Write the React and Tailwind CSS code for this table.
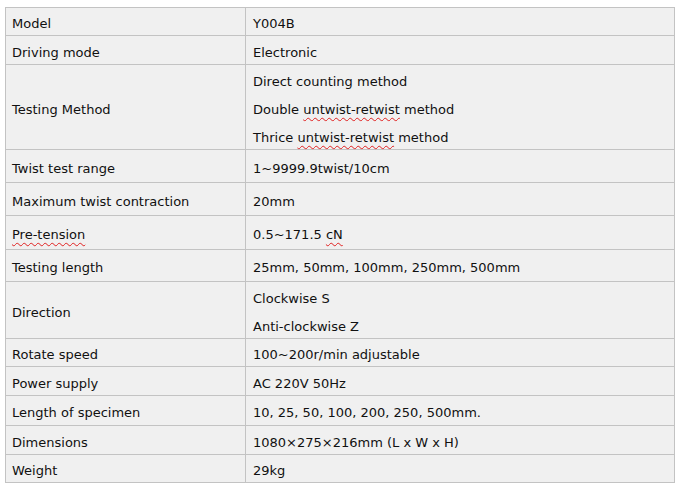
import React from "react";

const sq = "underline decoration-wavy decoration-[#e02020] decoration-1 underline-offset-[3px]";

const rows = [
  { h: "h-[28px]", a: "Model", b: ["Y004B"] },
  { h: "h-[29px]", a: "Driving mode", b: ["Electronic"] },
  {
    h: "h-[85px]",
    a: "Testing Method",
    b: [
      "Direct counting method",
      <>Double <span className={sq}>untwist-retwist</span> method</>,
      <>Thrice <span className={sq}>untwist-retwist</span> method</>,
    ],
  },
  { h: "h-[33px]", a: "Twist test range", b: ["1~9999.9twist/10cm"] },
  { h: "h-[33px]", a: "Maximum twist contraction", b: ["20mm"] },
  { h: "h-[34px]", a: <span className={sq}>Pre-tension</span>, b: [<>0.5~171.5 <span className={sq}>cN</span></>] },
  { h: "h-[32px]", a: "Testing length", b: ["25mm, 50mm, 100mm, 250mm, 500mm"] },
  { h: "h-[57px]", a: "Direction", b: ["Clockwise S", "Anti-clockwise Z"] },
  { h: "h-[28px]", a: "Rotate speed", b: ["100~200r/min adjustable"] },
  { h: "h-[29px]", a: "Power supply", b: ["AC 220V 50Hz"] },
  { h: "h-[30px]", a: "Length of specimen", b: ["10, 25, 50, 100, 200, 250, 500mm."] },
  { h: "h-[29px]", a: "Dimensions", b: ["1080×275×216mm (L x W x H)"] },
  { h: "h-[27px]", a: "Weight", b: ["29kg"], last: true },
];

export default function App() {
  return (
    <div className="w-[681px] h-[491px] bg-white pt-[7px] pl-[5px]" style={{ fontFamily: '"DejaVu Sans", sans-serif' }}>
      <div className="w-[670px] border border-[#c3c3c3] bg-[#f0f0f0] text-[13px] text-[#111]">
        {rows.map((r, i) => (
          <div key={i} className={`flex box-border ${r.h} ${r.last ? "" : "border-b border-[#c3c3c3]"}`}>
            <div className="w-[240px] shrink-0 border-r border-[#c3c3c3] pl-[6px] pt-[5px] flex items-center">
              {r.a}
            </div>
            <div className="flex-1 pl-[7px] pt-[5px] flex flex-col justify-center">
              {r.b.map((t, j) => (
                <div key={j} className="leading-[28px]">{t}</div>
              ))}
            </div>
          </div>
        ))}
      </div>
    </div>
  );
}
